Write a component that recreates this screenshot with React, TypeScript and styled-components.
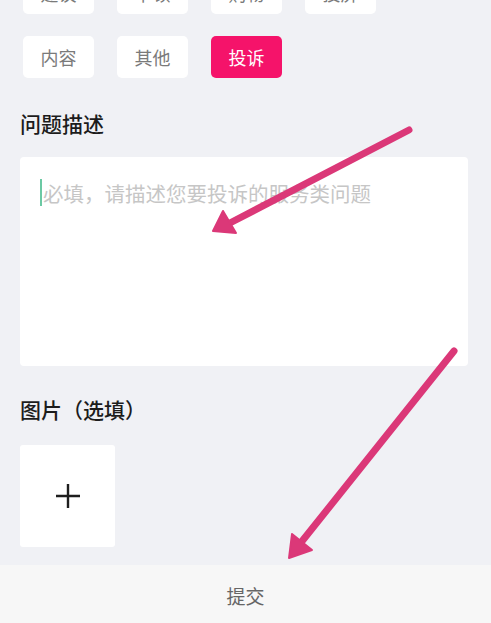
import React from 'react';
import styled, { createGlobalStyle } from 'styled-components';

const topTags = ['建议', '卡顿', '购物', '投屏'];
const tags = ['内容', '其他', '投诉'];
const active = '投诉';

function App() {
  return (
    <SPage>
      <GlobalStyle />
      <SContent>
        <STagGrid>
          {topTags.map((t) => (
            <STag key={t}>{t}</STag>
          ))}
          {tags.map((t) => (
            <STag key={t} $active={t === active}>
              {t}
            </STag>
          ))}
        </STagGrid>
        <STitle>问题描述</STitle>
        <STextBox>
          <SCaret />
          <SPlaceholder>必填，请描述您要投诉的服务类问题</SPlaceholder>
        </STextBox>
        <STitle $gap={29}>图片（选填）</STitle>
        <SUpload>
          <svg width='26' height='26' viewBox='0 0 26 26'>
            <path d='M13 1v24M1 13h24' stroke='#1e1e1e' strokeWidth='2.4' />
          </svg>
        </SUpload>
      </SContent>
      <SSubmitBar>提交</SSubmitBar>
      <SArrows width='491' height='623' viewBox='0 0 491 623'>
        <g fill='#db3878' stroke='#db3878' strokeLinecap='round'>
          <line x1='409' y1='130' x2='228' y2='224' strokeWidth='7' />
          <polygon points='213,231 223,211 236,233' strokeWidth='2' strokeLinejoin='round' />
          <line x1='454' y1='351' x2='299' y2='545' strokeWidth='7' />
          <polygon points='289,558 292,534 312,550' strokeWidth='2' strokeLinejoin='round' />
        </g>
      </SArrows>
    </SPage>
  );
}

export default App;

const GlobalStyle = createGlobalStyle`
  html, body {
    margin: 0;
    padding: 0;
    background: #f0f1f5;
    font-family: 'Noto Sans CJK SC', 'Noto Sans', sans-serif;
  }
`;

const SPage = styled.div`
  position: relative;
  width: 491px;
  height: 623px;
  overflow: hidden;
  display: flex;
  flex-direction: column;
  background: #f0f1f5;
`;

const SContent = styled.div`
  flex: 1;
  display: flex;
  flex-direction: column;
  align-items: flex-start;
  padding: 0 23px 0 20px;
  margin-top: -28px;
`;

const STagGrid = styled.div`
  display: grid;
  grid-template-columns: repeat(4, 71px);
  column-gap: 23px;
  row-gap: 22px;
  margin-left: 3px;
`;

const STag = styled.div<{ $active?: boolean }>`
  height: 42px;
  border-radius: 5px;
  display: flex;
  align-items: center;
  justify-content: center;
  font-size: 18px;
  color: ${(p) => (p.$active ? '#ffffff' : '#7a7a7a')};
  background: ${(p) => (p.$active ? '#f5136a' : '#ffffff')};
`;

const STitle = styled.div<{ $gap?: number }>`
  margin-top: ${(p) => p.$gap ?? 31}px;
  font-size: 21px;
  line-height: 28px;
  font-weight: 500;
  color: #1c1c1c;
`;

const STextBox = styled.div`
  margin-top: 20px;
  width: 448px;
  height: 209px;
  box-sizing: border-box;
  background: #ffffff;
  border-radius: 4px;
  padding: 22px 20px 0 20px;
  display: flex;
  align-items: flex-start;
`;

const SCaret = styled.div`
  width: 2px;
  height: 27px;
  background: #6cc9a4;
  margin-right: 1px;
`;

const SPlaceholder = styled.div`
  font-size: 20.5px;
  line-height: 28px;
  color: #c6c6c6;
`;

const SUpload = styled.div`
  margin-top: 22px;
  width: 95px;
  height: 102px;
  background: #ffffff;
  border-radius: 3px;
  display: flex;
  align-items: center;
  justify-content: center;
`;

const SSubmitBar = styled.div`
  height: 58px;
  flex-shrink: 0;
  background: #f7f7f7;
  display: flex;
  align-items: center;
  justify-content: center;
  padding-top: 2px;
  box-sizing: border-box;
  font-size: 19px;
  color: #666666;
`;

const SArrows = styled.svg`
  position: absolute;
  left: 0;
  top: 0;
  pointer-events: none;
`;
